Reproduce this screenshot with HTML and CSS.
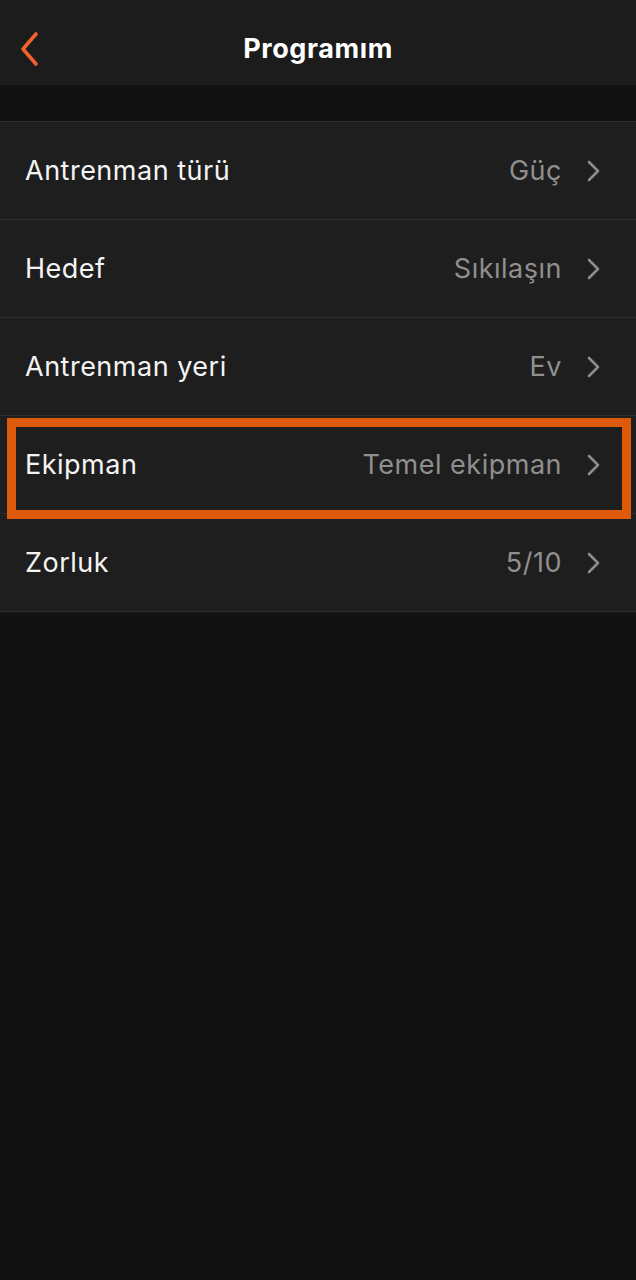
FILE: index.html
```html
<!DOCTYPE html>
<html lang="tr">
<head>
    <meta charset="UTF-8">
    <meta name="viewport" content="width=device-width, initial-scale=1.0">
    <title>Programım</title>
    <link rel="stylesheet" href="styles.css">
</head>
<body>
<div class="header">
    <span class="back">
        <svg width="24" height="36" viewBox="0 0 24 36"><path d="M18 3 L5 18 L18 33" fill="none" stroke="#f0622c" stroke-width="3.6" stroke-linecap="round" stroke-linejoin="round"/></svg>
    </span>
    <h1 class="title">Programım</h1>
</div>
<div class="spacer"></div>
<div class="list">
    <div class="row">
        <span class="label">Antrenman türü</span>
        <span class="value">Güç</span>
        <svg class="chevron" width="14" height="24" viewBox="0 0 14 24"><path d="M3 3 L12 12 L3 21" fill="none" stroke="#8c8c8c" stroke-width="2.6" stroke-linecap="round" stroke-linejoin="round"/></svg>
    </div>
    <div class="row">
        <span class="label">Hedef</span>
        <span class="value">Sıkılaşın</span>
        <svg class="chevron" width="14" height="24" viewBox="0 0 14 24"><path d="M3 3 L12 12 L3 21" fill="none" stroke="#8c8c8c" stroke-width="2.6" stroke-linecap="round" stroke-linejoin="round"/></svg>
    </div>
    <div class="row">
        <span class="label">Antrenman yeri</span>
        <span class="value">Ev</span>
        <svg class="chevron" width="14" height="24" viewBox="0 0 14 24"><path d="M3 3 L12 12 L3 21" fill="none" stroke="#8c8c8c" stroke-width="2.6" stroke-linecap="round" stroke-linejoin="round"/></svg>
    </div>
    <div class="row">
        <span class="label">Ekipman</span>
        <span class="value">Temel ekipman</span>
        <svg class="chevron" width="14" height="24" viewBox="0 0 14 24"><path d="M3 3 L12 12 L3 21" fill="none" stroke="#8c8c8c" stroke-width="2.6" stroke-linecap="round" stroke-linejoin="round"/></svg>
        <div class="highlight-box"></div>
    </div>
    <div class="row">
        <span class="label">Zorluk</span>
        <span class="value">5/10</span>
        <svg class="chevron" width="14" height="24" viewBox="0 0 14 24"><path d="M3 3 L12 12 L3 21" fill="none" stroke="#8c8c8c" stroke-width="2.6" stroke-linecap="round" stroke-linejoin="round"/></svg>
    </div>
</div>
</body>
</html>
```

FILE: styles.css
```css
body {
    font-family: Inter, "Noto Sans", sans-serif;
    background-color: #121212;
    margin: 0;
    padding: 0;
    color: #f2f2f2;
}
.header {
    height: 85px;
    background: #1c1c1c;
    display: flex;
    align-items: center;
    justify-content: center;
    position: relative;
}
.back {
    position: absolute;
    left: 18px;
    top: 31px;
    display: flex;
}
.title {
    margin: 0;
    font-size: 27px;
    font-weight: 700;
    color: #fff;
    letter-spacing: 0.6px;
    padding-top: 12px;
}
.spacer {
    height: 36px;
    background: #121212;
}
.list {
    border-top: 1px solid #2c2c2c;
}
.row {
    height: 97px;
    background: #1e1e1e;
    border-bottom: 1px solid #2e2e2e;
    display: flex;
    align-items: center;
    padding: 0 36px 0 25px;
    position: relative;
    font-size: 27px;
    letter-spacing: 0.5px;
}
.label {
    flex: 1;
    color: #f4f4f4;
}
.value {
    color: #8f8f8f;
    margin-right: 24px;
}
.chevron {
    display: block;
}
.highlight-box {
    position: absolute;
    z-index: 1;
    left: 7px;
    right: 5px;
    top: 2px;
    bottom: -6px;
    border: 9px solid #dd5a0b;
}
```
